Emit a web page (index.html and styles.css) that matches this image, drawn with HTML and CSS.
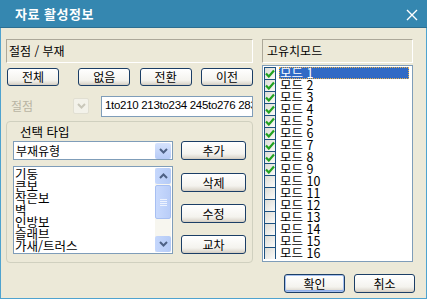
FILE: index.html
```html
<!DOCTYPE html>
<html lang="ko">
<head>
    <meta charset="UTF-8">
    <title>자료 활성정보</title>
    <link rel="stylesheet" href="styles.css">
</head>
<body>
    <div class="window">
        <div class="titlebar">
            <span class="title">자료 활성정보</span>
            <svg class="close" width="12" height="12" viewBox="0 0 12 12">
                <path d="M1 1L11 11M11 1L1 11" stroke="#fff" stroke-width="1.4"/>
            </svg>
        </div>
        <div class="content">
            <div class="left">
                <div class="static">절점 / 부재</div>
                <div class="btn-row">
                    <button class="btn">전체</button>
                    <button class="btn">없음</button>
                    <button class="btn">전환</button>
                    <button class="btn">이전</button>
                </div>
                <div class="node-row">
                    <div class="combo disabled">
                        <span class="combo-text">절점</span>
                        <span class="arrow"><svg width="9" height="6" viewBox="0 0 9 6"><path d="M1 1L4.5 4.5L8 1" fill="none" stroke="#c9c7ba" stroke-width="2"/></svg></span>
                    </div>
                    <div class="edit">1to210 213to234 245to276 283to300</div>
                </div>
                <div class="group">
                    <div class="group-label">선택 타입</div>
                    <div class="group-body">
                        <div class="group-main">
                            <div class="combo wide">
                                <span class="combo-text">부재유형</span>
                                <span class="arrow"><svg width="9" height="6" viewBox="0 0 9 6"><path d="M1 1L4.5 4.5L8 1" fill="none" stroke="#4d6185" stroke-width="2"/></svg></span>
                            </div>
                            <div class="listbox">
                                <ul class="items">
                                    <li>기둥</li>
                                    <li>큰보</li>
                                    <li>작은보</li>
                                    <li>벽</li>
                                    <li>인방보</li>
                                    <li>슬래브</li>
                                    <li>가새/트러스</li>
                                </ul>
                                <div class="scrollbar">
                                    <span class="sb-btn"><svg width="9" height="6" viewBox="0 0 9 6"><path d="M1 5L4.5 1.5L8 5" fill="none" stroke="#4d6185" stroke-width="2"/></svg></span>
                                    <span class="sb-thumb"><i></i><i></i><i></i><i></i></span>
                                    <span class="sb-track"></span>
                                    <span class="sb-btn"><svg width="9" height="6" viewBox="0 0 9 6"><path d="M1 1L4.5 4.5L8 1" fill="none" stroke="#4d6185" stroke-width="2"/></svg></span>
                                </div>
                            </div>
                        </div>
                        <div class="side-btns">
                            <button class="btn">추가</button>
                            <button class="btn">삭제</button>
                            <button class="btn">수정</button>
                            <button class="btn">교차</button>
                        </div>
                    </div>
                </div>
            </div>
            <div class="right">
                <div class="static">고유치모드</div>
                <ul class="modes" id="modes"></ul>
                <div class="ok-row">
                    <button class="btn default">확인</button>
                    <button class="btn">취소</button>
                </div>
            </div>
        </div>
    </div>

    <script>
        const modes = document.getElementById('modes');
        for (let i = 1; i <= 16; i++) {
            const li = document.createElement('li');
            const checked = i <= 9;
            li.innerHTML = `
                <span class="check">${checked ? '<svg width="10" height="9" viewBox="0 0 10 9"><path d="M1 4.5L3.8 7.5L9 1.5" fill="none" stroke="#21a121" stroke-width="2.2"/></svg>' : ''}</span>
                <span class="mode-text${i === 1 ? ' selected' : ''}">모드 ${i}</span>
            `;
            modes.appendChild(li);
        }
    </script>
</body>
</html>
```

FILE: styles.css
```css
body {
    margin: 0;
    font-family: "Noto Sans CJK KR", "Noto Sans", sans-serif;
    font-size: 12px;
    color: #000;
    background-color: #ece9d8;
}
.window {
    width: 427px;
    height: 299px;
    box-sizing: border-box;
    border: 1px solid #4fa3cf;
    border-top: none;
    background-color: #ece9d8;
    display: flex;
    flex-direction: column;
}
.titlebar {
    height: 27px;
    background-color: #3587b0;
    border-bottom: 1px solid #2d6f91;
    display: flex;
    align-items: center;
    justify-content: space-between;
    padding: 0 9px 0 15px;
    margin: 0 -1px;
}
.title {
    color: #fff;
    font-weight: bold;
    font-size: 13px;
    letter-spacing: 0.5px;
}
.close {
    margin-top: 3px;
}
.content {
    display: flex;
    gap: 9px;
    padding: 11px 0 0 5px;
}
.left {
    width: 247px;
    display: flex;
    flex-direction: column;
}
.right {
    width: 153px;
    display: flex;
    flex-direction: column;
}
.static {
    height: 24px;
    box-sizing: border-box;
    border: 1px solid #aca899;
    border-right-color: #fff;
    border-bottom-color: #fff;
    padding-left: 2px;
    line-height: 21px;
}
.right .static {
    width: 151px;
    padding-left: 4px;
}
.btn {
    font-family: inherit;
    font-size: 12px;
    line-height: 14px;
    height: 18px;
    padding: 0;
    color: #000;
    border: 1px solid #1b3e66;
    border-radius: 3px;
    background: linear-gradient(#ffffff, #f4f3ee 70%, #d6d0c5);
    box-shadow: inset 0 -1px 0 #d6d0c5;
}
.btn-row {
    display: flex;
    justify-content: space-between;
    margin-top: 5px;
    padding-left: 1px;
}
.btn-row .btn {
    width: 52px;
}
.btn-row .btn:nth-child(2) {
    margin-left: 10px;
}
.node-row {
    display: flex;
    justify-content: space-between;
    margin-top: 10px;
    padding-left: 1px;
}
.combo {
    height: 19px;
    box-sizing: border-box;
    display: flex;
    align-items: center;
    justify-content: space-between;
    background: #fff;
    border: 1px solid #7f9db9;
}
.combo.disabled {
    width: 84px;
    background: #ece9d8;
    border-color: #ece9d8;
    color: #b8b4a3;
}
.combo-text {
    padding-left: 3px;
}
.arrow {
    width: 16px;
    height: 16px;
    margin-right: 1px;
    display: flex;
    align-items: center;
    justify-content: center;
    border-radius: 2px;
    background: linear-gradient(#d6e3fd, #b6cbf7);
}
.combo.disabled .arrow {
    background: #f3f2ea;
    border: 1px solid #e1dfd2;
    box-sizing: border-box;
}
.edit {
    width: 152px;
    height: 21px;
    box-sizing: border-box;
    border: 1px solid #7f9db9;
    background: #fff;
    overflow: hidden;
    white-space: nowrap;
    padding: 2px 0 0 3px;
    font-family: "Liberation Sans", sans-serif;
    font-size: 11.5px;
    letter-spacing: -0.3px;
}
.group {
    margin-top: 4px;
    padding: 2px 6px 7px 6px;
    height: 142px;
    box-sizing: border-box;
    border: 1px solid #d0d0bf;
    border-radius: 4px;
}
.group-label {
    padding-left: 7px;
    line-height: 15px;
    font-size: 12.5px;
}
.group-body {
    display: flex;
    justify-content: space-between;
    margin-top: 2px;
}
.group-main {
    width: 160px;
    display: flex;
    flex-direction: column;
    gap: 6px;
}
.combo.wide {
    width: 160px;
}
.combo.wide .combo-text {
    padding-left: 2px;
}
.listbox {
    height: 88px;
    box-sizing: border-box;
    border: 1px solid #7f9db9;
    background: #fff;
    display: flex;
}
.items {
    flex: 1;
    list-style: none;
    margin: 0;
    padding: 1px 0 0 1px;
    line-height: 12px;
    font-size: 12.5px;
}
.scrollbar {
    width: 16px;
    margin: 1px 1px 1px 0;
    display: flex;
    flex-direction: column;
    gap: 1px;
    background: #f7f6ef;
}
.sb-btn {
    height: 16px;
    border-radius: 2px;
    background: linear-gradient(90deg, #c5d7fc, #b5cbf6);
    display: flex;
    align-items: center;
    justify-content: center;
}
.sb-thumb {
    height: 34px;
    border-radius: 2px;
    border: 1px solid #a7bff2;
    box-sizing: border-box;
    background: linear-gradient(90deg, #c9dafd, #b9cdf8);
    display: flex;
    flex-direction: column;
    align-items: center;
    justify-content: center;
    gap: 1px;
}
.sb-thumb i {
    width: 7px;
    height: 1px;
    background: #eef3fe;
}
.sb-track {
    flex: 1;
}
.side-btns {
    width: 65px;
    display: flex;
    flex-direction: column;
    gap: 12px;
}
.side-btns .btn {
    height: 19px;
}
.side-btns .btn:nth-child(2) {
    margin-top: 1px;
}
.modes {
    list-style: none;
    margin: 2px 0 0 0;
    padding: 1px;
    width: 151px;
    height: 197px;
    box-sizing: border-box;
    border: 1px solid #7f9db9;
    background: #fff;
    overflow: hidden;
}
.modes li {
    display: flex;
    align-items: center;
    height: 12px;
    line-height: 12px;
}
.check {
    width: 12px;
    height: 12px;
    box-sizing: border-box;
    border: 1px solid #1c5180;
    border-bottom: none;
    background: linear-gradient(135deg, #dcdcd6, #fbfbf9);
    display: flex;
    align-items: center;
    justify-content: center;
    margin-right: 3px;
}
.mode-text {
    flex: 1;
    font-size: 12.5px;
    padding-left: 1px;
}
.mode-text.selected {
    background: #316ac5;
    color: #fff;
    outline: 1px dotted #e8b04c;
    outline-offset: -1px;
    margin-right: 2px;
}
.ok-row {
    display: flex;
    justify-content: flex-end;
    gap: 9px;
    margin-top: 12px;
}
.ok-row .btn {
    width: 61px;
    height: 19px;
}
.btn.default {
    box-shadow: inset 0 0 0 1px #a6c0ee, inset 0 -2px 0 #8fb0ea;
}
```
